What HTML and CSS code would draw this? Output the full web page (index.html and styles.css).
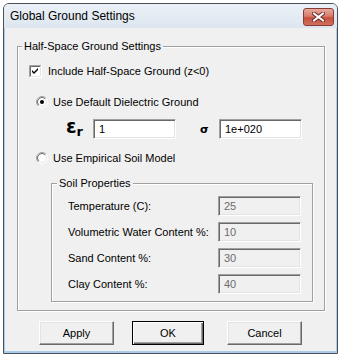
FILE: index.html
```html
<!DOCTYPE html>
<html>
<head>
<meta charset="utf-8">
<title>Global Ground Settings</title>
<link rel="stylesheet" href="styles.css">
</head>
<body>
<div class="window">
  <div class="titlebar">
    <span class="title">Global Ground Settings</span>
    <span class="close-btn">
      <svg width="13" height="10" viewBox="0 0 13 10">
        <path d="M2 1.5 L11 8.5 M11 1.5 L2 8.5" stroke="#6b2a22" stroke-width="4" stroke-linecap="square" fill="none"/>
        <path d="M2 1.5 L11 8.5 M11 1.5 L2 8.5" stroke="#ffffff" stroke-width="2" stroke-linecap="square" fill="none"/>
      </svg>
    </span>
  </div>
  <div class="client">
    <fieldset class="group group-outer">
      <legend>Half-Space Ground Settings</legend>
      <div class="outer-body">
        <div class="row check-row">
          <span class="checkbox">
            <svg width="13" height="13" viewBox="0 0 13 13">
              <rect x="0" y="0" width="13" height="13" fill="#fff"/>
              <path d="M0.5 12V0.5H12" stroke="#a0a0a0" fill="none"/>
              <path d="M1.5 11V1.5H11" stroke="#696969" fill="none"/>
              <path d="M0 12.5H12.5V0" stroke="#ffffff" fill="none"/>
              <path d="M1 11.5H11.5V1" stroke="#e3e3e3" fill="none"/>
              <path d="M3 5 L5 7 L9 3 L9 5 L5 9 L3 7 Z" fill="#000"/>
            </svg>
          </span>
          <span class="opt-label">Include Half-Space Ground (z&lt;0)</span>
        </div>
        <div class="row radio-row r1">
          <span class="radio">
            <svg width="12" height="12" viewBox="0 0 12 12">
              <circle cx="6" cy="6" r="5.5" fill="#fff" stroke="#fff"/>
              <path d="M2.1 9.9 A5.5 5.5 0 0 1 9.9 2.1" stroke="#a0a0a0" fill="none"/>
              <circle cx="6" cy="6" r="4.5" fill="#fff" stroke="#e3e3e3"/>
              <path d="M2.8 9.2 A4.5 4.5 0 0 1 9.2 2.8" stroke="#696969" fill="none"/>
              <circle cx="6" cy="6" r="2" fill="#000"/>
            </svg>
          </span>
          <span class="opt-label radio-label">Use Default Dielectric Ground</span>
        </div>
        <div class="row param-row">
          <span class="sym eps">ε<span class="eps-sub">r</span></span>
          <span class="textbox">1</span>
          <span class="sym sigma">σ</span>
          <span class="textbox">1e+020</span>
        </div>
        <div class="row radio-row r2">
          <span class="radio">
            <svg width="12" height="12" viewBox="0 0 12 12">
              <circle cx="6" cy="6" r="5.5" fill="#fff" stroke="#fff"/>
              <path d="M2.1 9.9 A5.5 5.5 0 0 1 9.9 2.1" stroke="#a0a0a0" fill="none"/>
              <circle cx="6" cy="6" r="4.5" fill="#fff" stroke="#e3e3e3"/>
              <path d="M2.8 9.2 A4.5 4.5 0 0 1 9.2 2.8" stroke="#696969" fill="none"/>
            </svg>
          </span>
          <span class="opt-label radio-label">Use Empirical Soil Model</span>
        </div>
        <fieldset class="group group-inner">
          <legend class="inner-legend">Soil Properties</legend>
          <div class="inner-body">
            <div class="field-row">
              <span class="field-label">Temperature (C):</span>
              <span class="textbox disabled">25</span>
            </div>
            <div class="field-row">
              <span class="field-label">Volumetric Water Content %:</span>
              <span class="textbox disabled">10</span>
            </div>
            <div class="field-row">
              <span class="field-label">Sand Content %:</span>
              <span class="textbox disabled">30</span>
            </div>
            <div class="field-row">
              <span class="field-label">Clay Content %:</span>
              <span class="textbox disabled">40</span>
            </div>
          </div>
        </fieldset>
      </div>
    </fieldset>
    <div class="buttons">
      <button class="btn btn-apply">Apply</button>
      <button class="btn btn-ok">OK</button>
      <button class="btn btn-cancel">Cancel</button>
    </div>
  </div>
</div>
</body>
</html>
```

FILE: styles.css
```css
* {
  box-sizing: border-box;
}

body {
  margin: 0;
  background: #ffffff;
  font-family: "Liberation Sans", Arial, sans-serif;
  font-size: 11px;
  line-height: 13px;
  color: #000;
}

.window {
  margin: 3px 0 0 3px;
  width: 335px;
  height: 351px;
  border: 1px solid #4b5058;
  border-radius: 6px 6px 0 0;
  display: flex;
  flex-direction: column;
  overflow: hidden;
  background: #f0f0f0;
}

.titlebar {
  height: 24px;
  flex: none;
  display: flex;
  justify-content: space-between;
  align-items: flex-start;
  background: linear-gradient(#eaf0f6, #dde6f0);
}

.title {
  font-size: 12px;
  line-height: 24px;
  padding-left: 6px;
  color: #000;
}

.close-btn {
  margin: 4px 3px 0 0;
  width: 31px;
  height: 18px;
  border: 1px solid #8a3b33;
  border-radius: 3px;
  background: linear-gradient(#e7aa9e 0%, #d77b6c 45%, #c8503f 55%, #d0705f 100%);
  display: flex;
  align-items: center;
  justify-content: center;
}

.client {
  flex: 1;
  border: 1px solid #a9cbec;
  border-top: 0;
  border-bottom-width: 2px;
  padding: 12px 0 0 12px;
  display: flex;
  flex-direction: column;
}

.group {
  margin: 0;
  padding: 0;
  border: 1px solid #a0a0a0;
  box-shadow: inset 1px 1px 0 #ffffff, 1px 1px 0 #ffffff;
  min-width: 0;
}

.group legend {
  padding: 0 2px;
  margin-left: 4px;
  line-height: 13px;
  background: #f0f0f0;
}

.group-outer {
  width: 308px;
}

.outer-body {
  padding: 12px 0 8px 11px;
  display: flex;
  flex-direction: column;
}

.row {
  display: flex;
  align-items: center;
}

.check-row {
  height: 13px;
}

.checkbox {
  width: 13px;
  height: 13px;
  display: flex;
}

.opt-label {
  margin-left: 6px;
}

.radio-row {
  height: 12px;
}

.r1 {
  margin-top: 18px;
}

.r2 {
  margin-top: 13px;
}

.radio {
  margin-left: 7px;
  width: 12px;
  height: 12px;
  display: flex;
}

.radio-label {
  margin-left: 5px;
}

.param-row {
  margin-top: 11px;
  height: 20px;
  align-items: baseline;
}

.sym {
  font-family: "DejaVu Sans", sans-serif;
  font-weight: bold;
}

.eps {
  margin-left: 35px;
  width: 29px;
  font-size: 19px;
  line-height: 12px;
  padding-left: 2px;
}

.eps-sub {
  font-size: 13px;
  vertical-align: -3px;
}

.sigma {
  margin-left: 23px;
  width: 20px;
  font-size: 11px;
  padding-left: 1px;
}

.textbox {
  display: flex;
  align-items: center;
  width: 83px;
  height: 20px;
  border: 1px solid;
  border-color: #a0a0a0 #ffffff #ffffff #a0a0a0;
  box-shadow: inset 1px 1px 0 #696969, inset -1px -1px 0 #e3e3e3;
  background: #ffffff;
  padding-left: 5px;
  color: #000;
}

.textbox.disabled {
  background: #f0f0f0;
  color: #6d6d6d;
}

.group-inner {
  margin-top: 13px;
  margin-left: 22px;
  width: 262px;
}

.group-inner .inner-legend {
  margin-left: 5px;
}

.inner-body {
  padding: 6px 0 7px 16px;
  display: flex;
  flex-direction: column;
  gap: 6px;
}

.field-row {
  display: flex;
  align-items: center;
  height: 20px;
}

.field-label {
  width: 150px;
}

.buttons {
  margin-top: 10px;
  display: flex;
}

.btn {
  height: 24px;
  padding: 0;
  font-family: inherit;
  font-size: 11px;
  color: #000;
  background: #f0f0f0;
  border: 1px solid;
  border-color: #ffffff #696969 #696969 #ffffff;
  box-shadow: inset -1px -1px 0 #a0a0a0, inset 1px 1px 0 #e3e3e3;
}

.btn-apply {
  margin-left: 22px;
  width: 75px;
}

.btn-ok {
  margin-left: 18px;
  width: 72px;
  border-color: #000;
  box-shadow: inset 1px 1px 0 #ffffff, inset -1px -1px 0 #696969, inset -2px -2px 0 #a0a0a0;
}

.btn-cancel {
  margin-left: 23px;
  width: 75px;
}
```
